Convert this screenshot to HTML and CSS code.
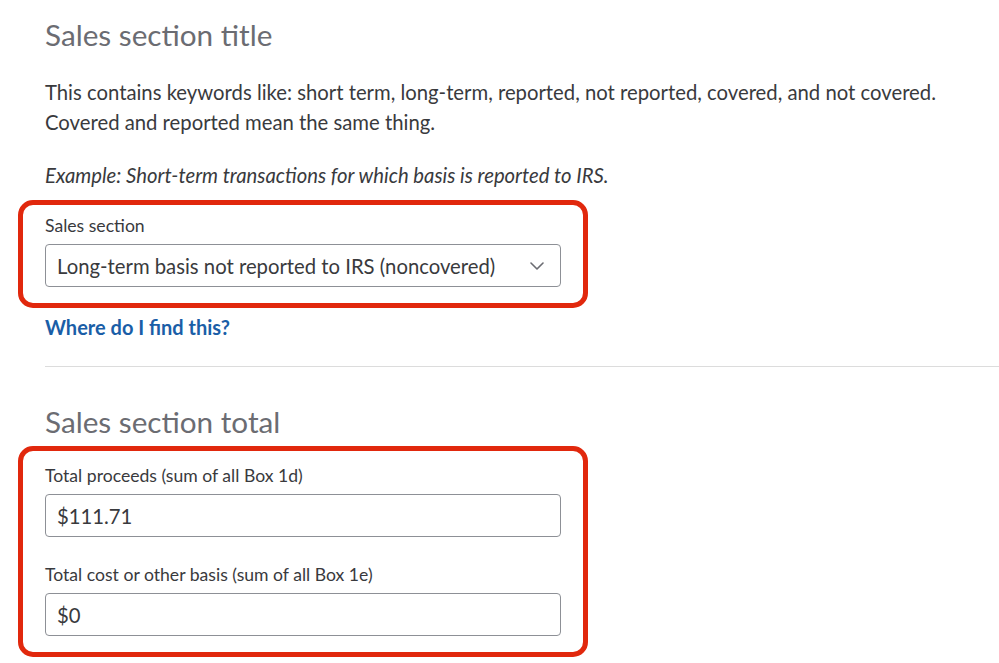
FILE: index.html
```html
<!DOCTYPE html>
<html lang="en">

<head>
    <meta charset="UTF-8">
    <meta name="viewport" content="width=device-width, initial-scale=1.0">
    <title>Sales section</title>
    <link rel="stylesheet" href="styles.css">
</head>

<body>
    <div class="page">
        <h2 class="section-title">Sales section title</h2>

        <p class="desc">This contains keywords like: short term, long-term, reported, not reported, covered, and not covered.<br>
            Covered and reported mean the same thing.</p>

        <p class="example">Example: Short-term transactions for which basis is reported to IRS.</p>

        <div class="highlight first">
            <label class="field-label" for="section">Sales section</label>
            <div class="select" id="section">
                <span>Long-term basis not reported to IRS (noncovered)</span>
                <svg class="chevron" width="14" height="8" viewBox="0 0 14 8">
                    <polyline points="1,1 7,7 13,1" fill="none" stroke="#6b6c72" stroke-width="1.6" stroke-linecap="round" stroke-linejoin="round" />
                </svg>
            </div>
        </div>

        <a class="help-link" href="#">Where do I find this?</a>

        <hr class="divider">

        <h2 class="section-title">Sales section total</h2>

        <div class="highlight second">
            <label class="field-label" for="proceeds">Total proceeds (sum of all Box 1d)</label>
            <div class="input" id="proceeds">$111.71</div>

            <label class="field-label spaced" for="basis">Total cost or other basis (sum of all Box 1e)</label>
            <div class="input" id="basis">$0</div>
        </div>
    </div>
</body>

</html>
```

FILE: styles.css
```css
body {
    margin: 0;
    background: #ffffff;
    font-family: 'Lato', 'Open Sans', sans-serif;
    color: #393a3d;
}

.page {
    padding: 17px 0 0 45px;
}

.section-title {
    margin: 0;
    font-size: 29.7px;
    line-height: 36px;
    font-weight: 400;
    color: #6b6c72;
}

.desc {
    margin: 24px 0 0;
    font-size: 20.3px;
    line-height: 30px;
}

.example {
    margin: 23px 0 0;
    font-size: 20.3px;
    line-height: 30px;
    font-style: italic;
}

.highlight {
    width: 516px;
    margin-left: -27px;
    padding: 0 22px;
    border: 5px solid #e1280d;
    border-radius: 15px;
}

.highlight.first {
    margin-top: 10px;
    padding-top: 11px;
    padding-bottom: 16px;
}

.highlight.second {
    margin-top: 6px;
    padding-top: 15px;
    padding-bottom: 16px;
}

.field-label {
    display: block;
    font-size: 17.6px;
    line-height: 20px;
    margin-bottom: 8px;
}

.field-label.spaced {
    margin-top: 28px;
}

.select,
.input {
    box-sizing: border-box;
    height: 43px;
    display: flex;
    align-items: center;
    padding: 0 11px;
    border: 1px solid #8d9096;
    border-radius: 4px;
    font-size: 20.3px;
}

.select {
    justify-content: space-between;
    padding-right: 16px;
}

.help-link {
    display: block;
    margin-top: 7px;
    font-size: 20px;
    line-height: 24px;
    font-weight: 700;
    color: #1a5ea7;
    text-decoration: none;
}

.divider {
    margin: 27px 0 37px;
    border: none;
    border-top: 1px solid #dcdcdc;
}
```
